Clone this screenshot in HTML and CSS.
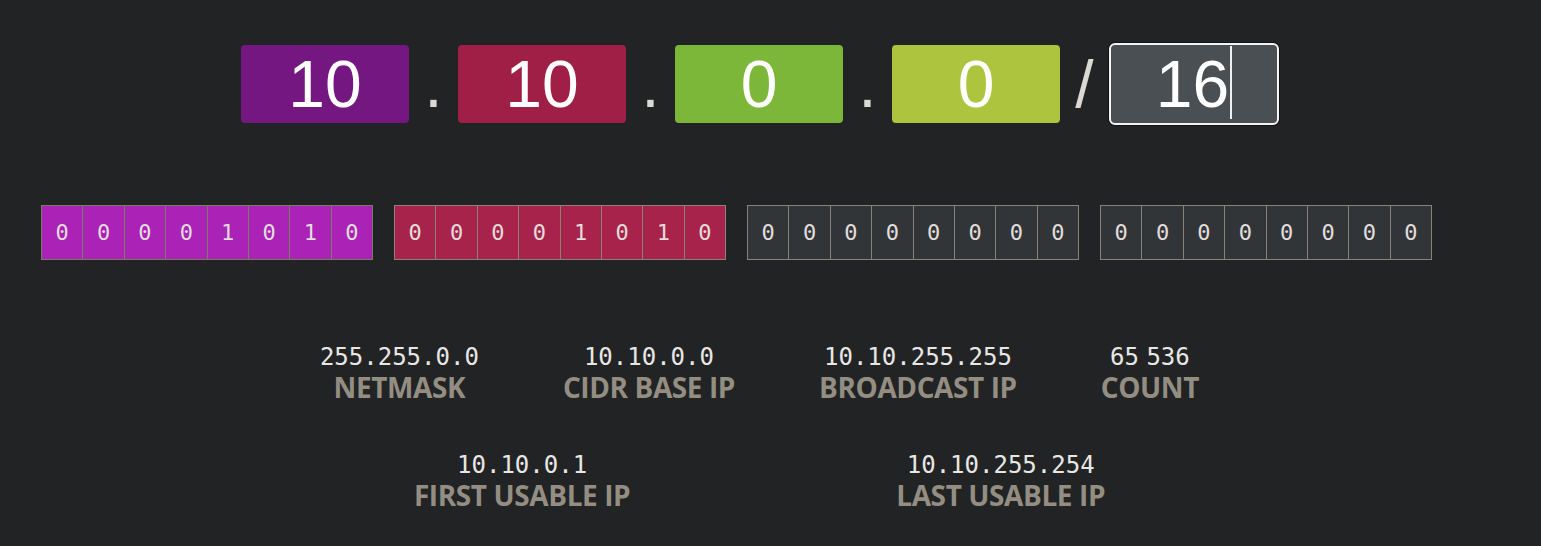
FILE: index.html
```html
<!DOCTYPE html>
<html lang="en">
<head>
<meta charset="utf-8">
<title>CIDR</title>
<link rel="stylesheet" href="styles.css">
</head>
<body>
<main class="page">
  <section class="ip-row">
    <div class="octet octet-1">10</div>
    <div class="sep">.</div>
    <div class="octet octet-2">10</div>
    <div class="sep">.</div>
    <div class="octet octet-3">0</div>
    <div class="sep">.</div>
    <div class="octet octet-4">0</div>
    <div class="sep slash">/</div>
    <div class="mask">16<span class="caret"></span></div>
  </section>

  <section class="bits-row">
    <div class="bits bits-1">
      <span class="bit">0</span><span class="bit">0</span><span class="bit">0</span><span class="bit">0</span><span class="bit">1</span><span class="bit">0</span><span class="bit">1</span><span class="bit">0</span>
    </div>
    <div class="bits bits-2">
      <span class="bit">0</span><span class="bit">0</span><span class="bit">0</span><span class="bit">0</span><span class="bit">1</span><span class="bit">0</span><span class="bit">1</span><span class="bit">0</span>
    </div>
    <div class="bits bits-off">
      <span class="bit">0</span><span class="bit">0</span><span class="bit">0</span><span class="bit">0</span><span class="bit">0</span><span class="bit">0</span><span class="bit">0</span><span class="bit">0</span>
    </div>
    <div class="bits bits-off">
      <span class="bit">0</span><span class="bit">0</span><span class="bit">0</span><span class="bit">0</span><span class="bit">0</span><span class="bit">0</span><span class="bit">0</span><span class="bit">0</span>
    </div>
  </section>

  <section class="results results-main">
    <div class="result">
      <div class="value">255.255.0.0</div>
      <div class="label">NETMASK</div>
    </div>
    <div class="result">
      <div class="value">10.10.0.0</div>
      <div class="label">CIDR BASE IP</div>
    </div>
    <div class="result">
      <div class="value">10.10.255.255</div>
      <div class="label">BROADCAST IP</div>
    </div>
    <div class="result">
      <div class="value">65<span class="thin"> </span>536</div>
      <div class="label">COUNT</div>
    </div>
  </section>

  <section class="results results-usable">
    <div class="result">
      <div class="value">10.10.0.1</div>
      <div class="label">FIRST USABLE IP</div>
    </div>
    <div class="result">
      <div class="value">10.10.255.254</div>
      <div class="label">LAST USABLE IP</div>
    </div>
  </section>
</main>
</body>
</html>
```

FILE: styles.css
```css
html, body {
  margin: 0;
  padding: 0;
  background: #222325;
  height: 100%;
  overflow: hidden;
}

.page {
  display: flex;
  flex-direction: column;
}

.ip-row {
  display: flex;
  justify-content: center;
  align-items: center;
  padding-top: 43px;
  padding-right: 21px;
  height: 82px;
  font-family: "Liberation Sans", Arial, sans-serif;
  font-size: 66px;
}

.octet {
  width: 168px;
  height: 78px;
  border-radius: 4px;
  color: #ffffff;
  text-align: center;
  line-height: 78px;
}

.octet-1 { background: #751781; }
.octet-2 { background: #a01f47; }
.octet-3 { background: #7cb73a; }
.octet-4 { background: #adc43e; }

.sep {
  width: 49px;
  text-align: center;
  color: #dcd9d4;
  line-height: 78px;
}

.slash {
  color: #dcd9d4;
}

.mask {
  box-sizing: border-box;
  width: 170px;
  height: 82px;
  border: 2px solid #f4f4f4;
  border-radius: 6px;
  background: #4a4f53;
  color: #ffffff;
  text-align: center;
  line-height: 78px;
  box-shadow: 0 0 0 1px #111214;
}

.caret {
  display: inline-block;
  width: 2px;
  height: 73px;
  margin-left: 1px;
  background: #f0f0f0;
  vertical-align: -12px;
}

.bits-row {
  display: flex;
  gap: 21px;
  margin-top: 80px;
  padding-left: 41px;
}

.bits {
  box-sizing: border-box;
  display: flex;
  width: 332px;
  height: 55px;
  border: 1px solid #8a8274;
}

.bit {
  flex: 1;
  display: flex;
  align-items: center;
  justify-content: center;
  border-right: 1px solid #8a8274;
  font-family: "DejaVu Sans Mono", monospace;
  font-size: 22px;
  color: #e2dedb;
}

.bit:last-child {
  border-right: none;
}

.bits-1 {
  background: #aa22b6;
  border-color: #7a7c60;
}
.bits-1 .bit { border-color: #7a7c60; }

.bits-2 {
  background: #a8234c;
}

.bits-off {
  background: #323538;
}

.results {
  display: flex;
  justify-content: center;
  padding-right: 22px;
}

.results-main {
  gap: 84px;
  margin-top: 83px;
}

.results-usable {
  gap: 266px;
  margin-top: 49px;
}

.result {
  display: flex;
  flex-direction: column;
  align-items: center;
}

.value {
  font-family: "DejaVu Sans Mono", monospace;
  font-size: 24px;
  line-height: 28px;
  color: #e9e7e4;
  white-space: nowrap;
}

.thin {
  letter-spacing: -7px;
}

.label {
  margin-top: 1px;
  font-family: "Open Sans", "Noto Sans", sans-serif;
  font-weight: 700;
  font-size: 28px;
  line-height: 30px;
  letter-spacing: -0.4px;
  color: #948e82;
  white-space: nowrap;
}
```
